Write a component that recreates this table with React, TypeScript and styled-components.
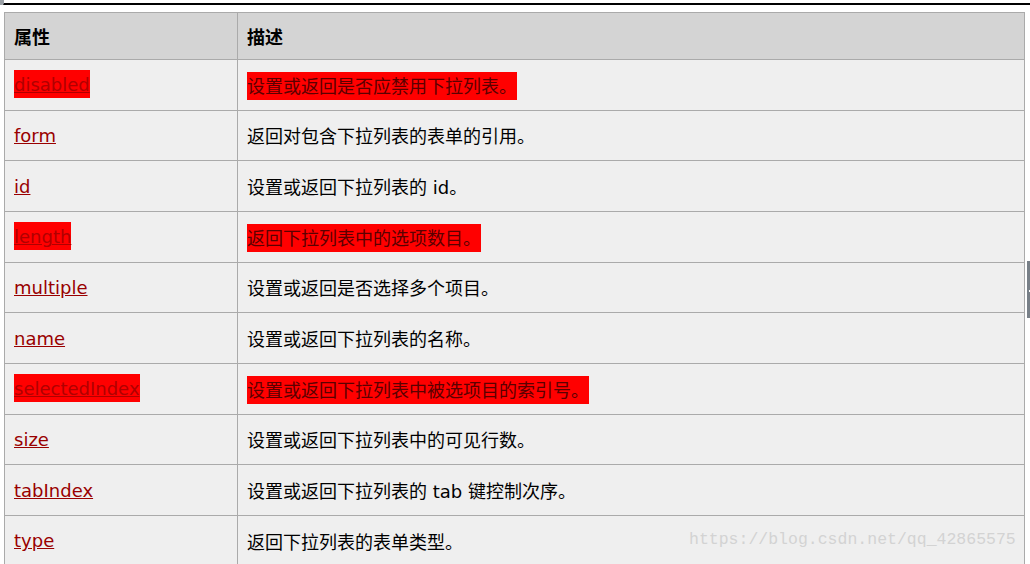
import React from "react";
import styled, { createGlobalStyle } from "styled-components";

const GlobalStyle = createGlobalStyle`
  html, body {
    margin: 0;
    padding: 0;
    background: #ffffff;
  }
  body {
    font-family: "DejaVu Sans", "Noto Sans CJK SC", sans-serif;
    overflow: hidden;
  }
`;

const Page = styled.div`
  position: relative;
  width: 1030px;
  height: 564px;
  overflow: hidden;
  padding-top: 3px;
  box-sizing: border-box;
`;

const CornerMark = styled.div`
  position: absolute;
  left: 0;
  top: 0;
  width: 4px;
  height: 5px;
  background: #9aa0a6;
  border-radius: 0 0 2px 0;
`;

const TopRule = styled.div`
  height: 2px;
  margin-left: 3px;
  background: #000000;
`;

const Table = styled.table`
  margin: 7px 0 0 4px;
  width: 1021px;
  border-collapse: collapse;
  table-layout: fixed;
  font-size: 18px;
`;

const HeadCell = styled.th<{ $w?: number }>`
  width: ${(p) => (p.$w ? `${p.$w}px` : "auto")};
  height: 46px;
  padding: 0 9px;
  background: #d4d4d4;
  border: 1px solid #aaaaaa;
  text-align: left;
  font-weight: bold;
  color: #000000;
  font-family: "DejaVu Sans", "Noto Sans CJK SC", sans-serif;
`;

const Cell = styled.td`
  height: 49.67px;
  padding: 0 9px;
  background: #efefef;
  border: 1px solid #aaaaaa;
  color: #000000;
  vertical-align: middle;
  white-space: nowrap;
  font-family: "DejaVu Sans", "Noto Sans CJK SC", sans-serif;
`;

const PropLink = styled.a<{ $hl?: boolean }>`
  color: ${(p) => (p.$hl ? "#b00000" : "#990000")};
  text-decoration: underline;
  background: ${(p) => (p.$hl ? "#ff0000" : "transparent")};
  padding: ${(p) => (p.$hl ? "4px 0 3px" : "0")};
`;

const Desc = styled.span<{ $hl?: boolean }>`
  color: ${(p) => (p.$hl ? "#5a0000" : "#000000")};
  background: ${(p) => (p.$hl ? "#ff0000" : "transparent")};
  padding: ${(p) => (p.$hl ? "4px 0 3px" : "0")};
`;

const ScrollMark = styled.div`
  position: absolute;
  left: 1027px;
  top: 261px;
  width: 3px;
  height: 57px;
  background: #788088;
  &::after {
    content: "";
    position: absolute;
    left: 2px;
    top: 29px;
    width: 1px;
    height: 2px;
    background: #ffffff;
  }
`;

const Watermark = styled.div`
  position: absolute;
  left: 689px;
  top: 530px;
  font-family: "Liberation Mono", "DejaVu Sans Mono", monospace;
  font-size: 16.5px;
  color: #d3d3d3;
  white-space: nowrap;
  pointer-events: none;
`;

type Row = { name: string; desc: string; hl?: boolean };

const rows: Row[] = [
  { name: "disabled", desc: "设置或返回是否应禁用下拉列表。", hl: true },
  { name: "form", desc: "返回对包含下拉列表的表单的引用。" },
  { name: "id", desc: "设置或返回下拉列表的 id。" },
  { name: "length", desc: "返回下拉列表中的选项数目。", hl: true },
  { name: "multiple", desc: "设置或返回是否选择多个项目。" },
  { name: "name", desc: "设置或返回下拉列表的名称。" },
  { name: "selectedIndex", desc: "设置或返回下拉列表中被选项目的索引号。", hl: true },
  { name: "size", desc: "设置或返回下拉列表中的可见行数。" },
  { name: "tabIndex", desc: "设置或返回下拉列表的 tab 键控制次序。" },
  { name: "type", desc: "返回下拉列表的表单类型。" },
];

export default function App() {
  return (
    <>
      <GlobalStyle />
      <Page>
        <CornerMark />
        <TopRule />
        <Table>
          <thead>
            <tr>
              <HeadCell $w={214}>属性</HeadCell>
              <HeadCell>描述</HeadCell>
            </tr>
          </thead>
          <tbody>
            {rows.map((r) => (
              <tr key={r.name}>
                <Cell>
                  <PropLink href="#" $hl={r.hl}>
                    {r.name}
                  </PropLink>
                </Cell>
                <Cell>
                  <Desc $hl={r.hl}>{r.desc}</Desc>
                </Cell>
              </tr>
            ))}
          </tbody>
        </Table>
        <ScrollMark />
        <Watermark>https://blog.csdn.net/qq_42865575</Watermark>
      </Page>
    </>
  );
}
